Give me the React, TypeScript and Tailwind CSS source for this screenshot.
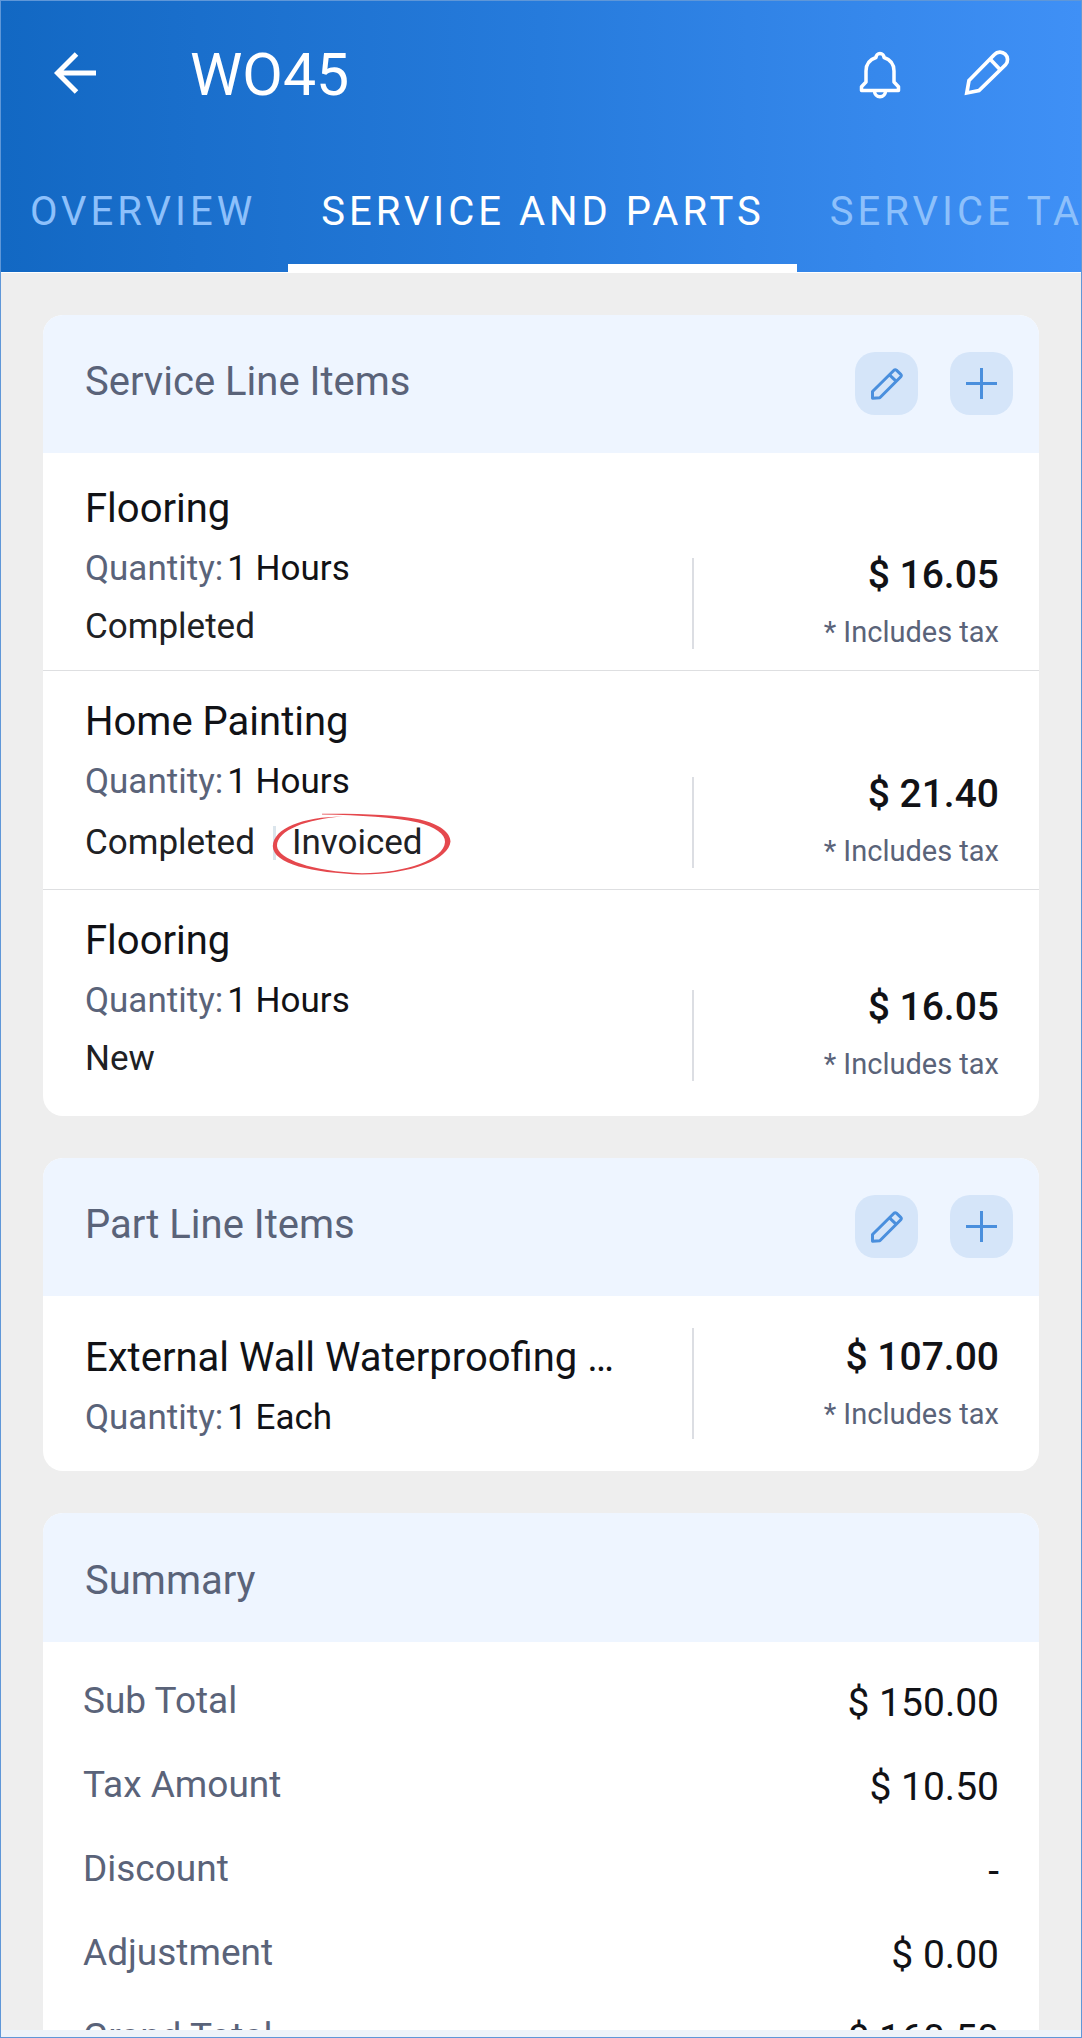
import React from "react";

type LineItem = {
  name: string;
  quantity: string;
  status?: string[];
  price: string;
};

const tabs = ["OVERVIEW", "SERVICE AND PARTS", "SERVICE TASKS"];

const services: LineItem[] = [
  { name: "Flooring", quantity: "1 Hours", status: ["Completed"], price: "$ 16.05" },
  { name: "Home Painting", quantity: "1 Hours", status: ["Completed", "Invoiced"], price: "$ 21.40" },
  { name: "Flooring", quantity: "1 Hours", status: ["New"], price: "$ 16.05" },
];

const summary = [
  ["Sub Total", "$ 150.00"],
  ["Tax Amount", "$ 10.50"],
  ["Discount", "-"],
  ["Adjustment", "$ 0.00"],
  ["Grand Total", "$ 160.50"],
];

function ArrowIcon() {
  return (
    <svg width="42" height="42" viewBox="0 0 42 42" fill="none" stroke="currentColor" strokeWidth="5" aria-hidden="true">
      <path d="M22.5 2 3.5 21l19 19M3.5 21H42" />
    </svg>
  );
}

function BellIcon() {
  return (
    <svg width="42" height="48" viewBox="0 0 42 48" fill="none" stroke="currentColor" strokeWidth="3.5" strokeLinejoin="round" aria-hidden="true">
      <path d="M17 6.500a4 4 0 0 1 8 0C31 8.500 35 13 35 20V31l4.500 4.700V39.500H2.500V35.700L7 31V20C7 13 11 8.500 17 6.500Z" />
      <path d="M15.500 40a5.500 5.700 0 0 0 11 0" />
    </svg>
  );
}

function PencilIcon() {
  return (
    <svg width="46" height="46" viewBox="0 0 46 46" fill="none" stroke="currentColor" strokeWidth="3.7" aria-hidden="true">
      <path d="M5 30.500 30.500 4.500A7.400 7.400 0 0 1 41.500 14.800L15 40.500 2.800 43Z" />
      <path d="m26 9 10 10.500" />
    </svg>
  );
}

function EditIcon() {
  return (
    <svg width="32" height="32" viewBox="0 0 32 32" fill="none" stroke="currentColor" strokeWidth="3" strokeLinejoin="round" aria-hidden="true">
      <path d="M1.500 30.200V23.500L23 2.200q1.200-1 2.400 0L29.800 6.400q1 1.200 0 2.300L8.800 29.700Z" />
      <path d="m18.500 6.800 6.800 6.600" />
    </svg>
  );
}

function PlusIcon() {
  return (
    <svg width="32" height="32" viewBox="0 0 32 32" fill="none" stroke="currentColor" strokeWidth="3" aria-hidden="true">
      <path d="M15.500 0v31M0 15.500h31" />
    </svg>
  );
}

function HandDrawnCircle() {
  return (
    <svg
      className="pointer-events-none absolute -top-[2px] -left-[20px] h-[62px] w-[180px]"
      viewBox="0 0 180 62"
      fill="#e5484d"
      aria-hidden="true"
    >
      <path d="M50 .8C90 .5 125 2 148 6.500C168 11 178.500 20 178.500 28.500C177 46 140 61.500 90 61.500C40 60 .8 51 .8 33C2 15 30 4 71 3.500C35 6 5 17 5 33C6 46 40 58.500 90 60.200C135 60 172 46 173 29C173.500 21 163 14 146 9.500C120 4 90 2.200 50 1.500Z" />
    </svg>
  );
}

function Card({ title, children, actions }: { title: string; children: React.ReactNode; actions?: boolean }) {
  return (
    <section className="shrink-0 overflow-hidden rounded-[20px] bg-white">
      <header
        className={`flex justify-between bg-[#eef5ff] pr-[26px] pl-[42px] ${
          actions ? "items-center pt-[37px] pb-[38px]" : "pt-11 pb-[37px]"
        }`}
      >
        <h2 className={`text-[40px] leading-[48px] text-[#5a6379] ${actions ? "pb-1" : ""}`}>{title}</h2>
        {actions && (
          <div className="flex gap-8 text-[#4a8fdd]">
            <button type="button" aria-label={`Edit ${title}`} className="flex size-[63px] items-center justify-center rounded-[20px] bg-[#d5e5f9]">
              <EditIcon />
            </button>
            <button type="button" aria-label={`Add ${title}`} className="flex size-[63px] items-center justify-center rounded-[20px] bg-[#d5e5f9]">
              <PlusIcon />
            </button>
          </div>
        )}
      </header>
      {children}
    </section>
  );
}

function ItemText({ item }: { item: LineItem }) {
  return (
    <div className="min-w-0 flex-1">
      <h3 className="truncate text-[40px] leading-[48px] text-[#111216]">{item.name}</h3>
      <p className="mt-[11px] flex gap-1 text-[35px] leading-[50px] text-[#111216]">
        <span className="text-[#5a6379]">Quantity:</span>
        <span>{item.quantity}</span>
      </p>
      {item.status && (
        <p className={`mt-2 flex items-center text-[35px] text-[#202124] ${item.status.length > 1 ? "leading-[56px]" : "leading-[50px]"}`}>
          <span>{item.status[0]}</span>
          {item.status[1] && (
            <>
              <span className="mr-4 ml-[18px] h-[34px] w-[3px] bg-[#dbe5ec]" />
              <span className="relative">
                {item.status[1]}
                <HandDrawnCircle />
              </span>
            </>
          )}
        </p>
      )}
    </div>
  );
}

function Price({ value }: { value: string }) {
  return (
    <>
      <p className="text-[39px] leading-[34px] font-medium text-[#111216]">{value}</p>
      <p className="mt-[23px] text-[29px] leading-[34px] text-[#5a6379]">* Includes tax</p>
    </>
  );
}

export default function App() {
  return (
    <div className="flex h-screen flex-col overflow-hidden border border-[#5f97d8] bg-[#eeeeee] font-['Roboto',sans-serif]">
      <header className="shrink-0 overflow-hidden border-b border-white bg-linear-to-r from-[#1268c3] via-[#267bdc] to-[#3f90f6] text-white">
        <div className="flex items-center pt-[42px] pr-[71px] pl-[53px]">
          <button type="button" aria-label="Back" className="mb-1">
            <ArrowIcon />
          </button>
          <h1 className="ml-[94px] flex-1 text-[59px] leading-[64px]">WO45</h1>
          <div className="flex items-center gap-[63px]">
            <button type="button" aria-label="Notifications">
              <BellIcon />
            </button>
            <button type="button" aria-label="Edit work order" className="mb-1">
              <PencilIcon />
            </button>
          </div>
        </div>
        <nav className="mt-[60px] flex">
          {tabs.map((tab, i) => (
            <a
              key={tab}
              href="#"
              aria-current={i === 1 ? "page" : undefined}
              className={`shrink-0 border-b-8 pt-[21px] pr-8 pb-7 pl-[33px] text-[40px] leading-[48px] tracking-widest whitespace-nowrap first:pl-[29px] ${
                i === 1 ? "border-white text-white" : "border-transparent text-[#8dc0fb]"
              }`}
            >
              {tab}
            </a>
          ))}
        </nav>
      </header>

      <main className="flex min-h-0 flex-1 flex-col gap-[42px] overflow-hidden px-[42px] pt-[42px]">
        <Card title="Service Line Items" actions>
          <ul>
            {services.map((item, i) => (
              <li
                key={i}
                className="flex items-end border-b border-[#dedfe1] pt-[27px] pr-10 pb-[18px] pl-[42px] first:pt-8 last:border-b-0 last:pb-8"
              >
                <ItemText item={item} />
                <div className="mb-[3px] w-[307px] shrink-0 border-l-2 border-[#dcdee3] text-right">
                  <Price value={item.price} />
                </div>
              </li>
            ))}
          </ul>
        </Card>

        <Card title="Part Line Items" actions>
          <div className="flex items-end pt-8 pr-10 pb-7 pl-[42px]">
            <ItemText item={{ name: "External Wall Waterproofing …", quantity: "1 Each", price: "$ 107.00" }} />
            <div className="mb-1 w-[307px] shrink-0 border-l-2 border-[#dcdee3] pt-3 pb-2 text-right">
              <Price value="$ 107.00" />
            </div>
          </div>
        </Card>

        <Card title="Summary">
          <dl className="px-10 pt-[17px]">
            {summary.map(([label, value]) => (
              <div key={label} className="flex h-[84px] items-center justify-between">
                <dt className="text-[37px] leading-[48px] text-[#5a6379]">{label}</dt>
                <dd className="pt-1 text-[39px] leading-[48px] text-[#111216]">{value}</dd>
              </div>
            ))}
          </dl>
        </Card>
      </main>
      <footer className="h-[7px] shrink-0 bg-[#edf3f9]" />
    </div>
  );
}
